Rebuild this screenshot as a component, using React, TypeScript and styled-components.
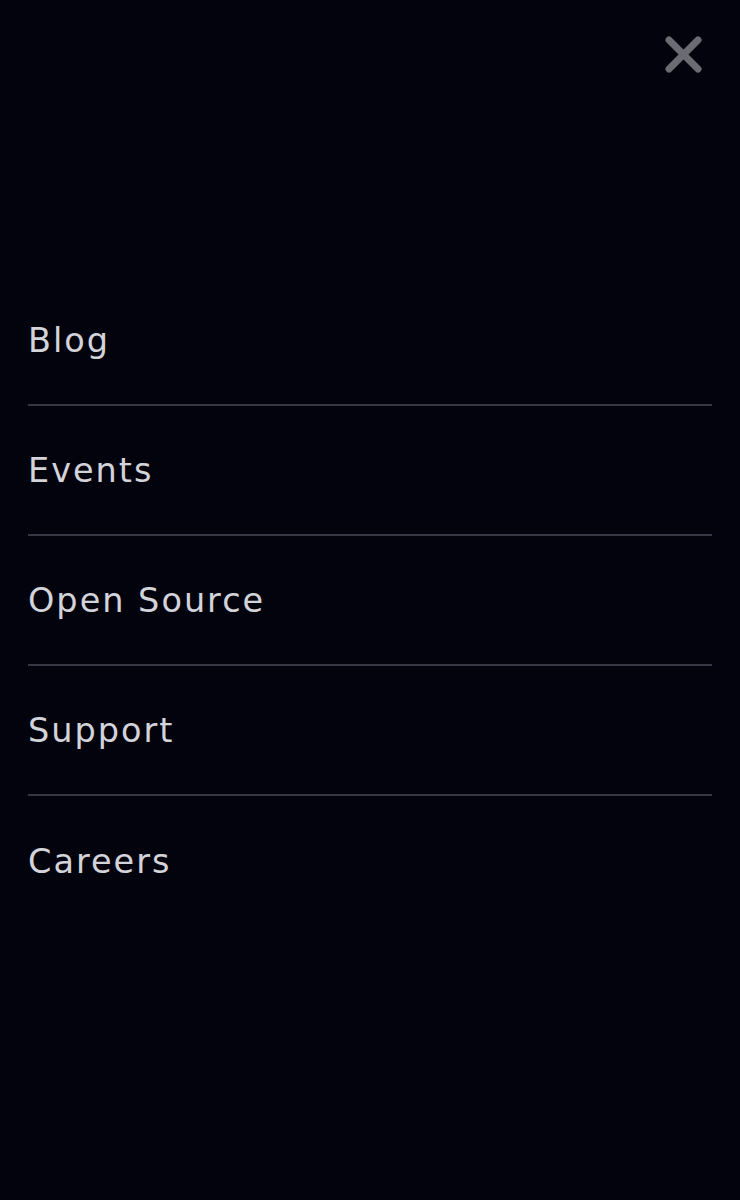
import React from "react";
import styled, { createGlobalStyle } from "styled-components";

const Global = createGlobalStyle`
  html, body { margin: 0; padding: 0; background: #03030d; }
  body { font-family: "DejaVu Sans", "Liberation Sans", sans-serif; }
`;

const Screen = styled.div`
  width: 740px;
  height: 1200px;
  background: #03030d;
  display: flex;
  flex-direction: column;
`;

const TopBar = styled.div`
  display: flex;
  justify-content: flex-end;
  padding: 34px 36px 0 0;
  height: 276px;
  box-sizing: border-box;
`;

const CloseButton = styled.button`
  width: 42px;
  height: 42px;
  padding: 0;
  border: 0;
  background: transparent;
  display: flex;
  align-items: center;
  justify-content: center;
  cursor: pointer;
`;

const Nav = styled.nav`
  display: flex;
  flex-direction: column;
  padding: 0 28px;
`;

const Item = styled.a<{ $last?: boolean }>`
  display: flex;
  align-items: center;
  height: 130px;
  box-sizing: border-box;
  border-bottom: ${(p) => (p.$last ? "none" : "2px solid #363644")};
  color: #d3d3da;
  font-family: "DejaVu Sans", sans-serif;
  font-size: 33.5px;
  letter-spacing: 2px;
  text-decoration: none;
  padding-top: 0;
`;

const items = ["Blog", "Events", "Open Source", "Support", "Careers"];

export default function App() {
  return (
    <Screen>
      <Global />
      <TopBar>
        <CloseButton aria-label="Close menu">
          <svg width="42" height="42" viewBox="0 0 42 42">
            <path
              d="M7 6 L36 35 M36 6 L7 35"
              stroke="#6b6b73"
              strokeWidth="7"
              strokeLinecap="round"
            />
          </svg>
        </CloseButton>
      </TopBar>
      <Nav>
        {items.map((t, i) => (
          <Item key={t} href="#" $last={i === items.length - 1}>
            {t}
          </Item>
        ))}
      </Nav>
    </Screen>
  );
}
